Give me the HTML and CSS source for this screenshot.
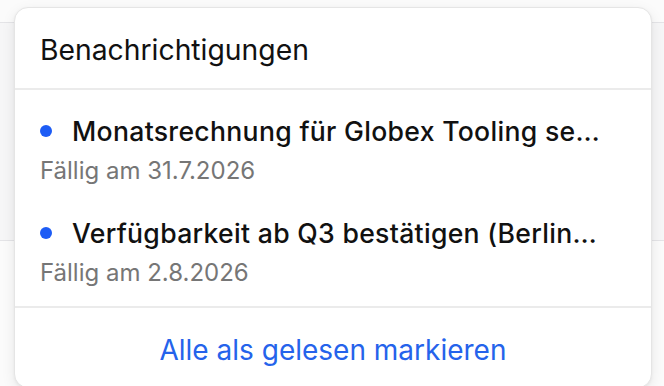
FILE: index.html
```html
<!DOCTYPE html>
<html lang="de">
<head>
<meta charset="utf-8">
<link rel="stylesheet" href="styles.css">
</head>
<body>
<div class="page">
  <div class="band"></div>
</div>
<div class="panel">
  <div class="panel-head">Benachrichtigungen</div>
  <ul class="list">
    <li class="item">
      <div class="item-title"><span class="dot"></span><span class="title-text">Monatsrechnung für Globex Tooling senden und prüfen</span></div>
      <div class="item-sub">Fällig am 31.7.2026</div>
    </li>
    <li class="item">
      <div class="item-title"><span class="dot"></span><span class="title-text">Verfügbarkeit ab Q3 bestätigen (Berlin-Nord)</span></div>
      <div class="item-sub">Fällig am 2.8.2026</div>
    </li>
  </ul>
  <div class="panel-foot"><a class="mark-all" href="#">Alle als gelesen markieren</a></div>
</div>
</body>
</html>
```
FILE: styles.css
```css
* { box-sizing: border-box; }
html, body { margin: 0; padding: 0; }
body {
  width: 664px;
  height: 386px;
  overflow: hidden;
  background: #fbfbfb;
  font-family: Inter, "Noto Sans", sans-serif;
  position: relative;
}
.page { padding-top: 22px; }
.band {
  height: 219px;
  background: #f6f6f7;
  border-top: 1px solid #e4e4e7;
  border-bottom: 1px solid #e4e4e7;
}
.panel {
  position: absolute;
  left: 14px;
  top: 7px;
  width: 638px;
  height: 381px;
  background: #fff;
  border: 1px solid #e5e5e5;
  border-radius: 14px;
  box-shadow: 0 4px 14px rgba(0,0,0,0.08), 0 1px 3px rgba(0,0,0,0.05);
  display: flex;
  flex-direction: column;
  overflow: hidden;
}
.panel-head {
  flex: none;
  height: 82px;
  padding: 3px 25px 0;
  display: flex;
  align-items: center;
  font-size: 28.3px;
  font-weight: 400;
  color: #111;
  border-bottom: 2px solid #ebebeb;
}
.list {
  flex: none;
  list-style: none;
  margin: 0;
  padding: 8px 0 4px;
  border-bottom: 2px solid #ebebeb;
}
.item {
  padding: 16px 44px 14px 25px;
  display: flex;
  flex-direction: column;
  gap: 8px;
}
.item-title {
  display: flex;
  align-items: center;
  gap: 20px;
  height: 34px;
  font-size: 26.6px;
  font-weight: 500;
  letter-spacing: 0.3px;
  color: #111;
}
.dot {
  flex: none;
  width: 12px;
  height: 12px;
  border-radius: 50%;
  background: #1d5cf5;
}
.title-text {
  white-space: nowrap;
  overflow: hidden;
  text-overflow: ellipsis;
  min-width: 0;
  line-height: 34px;
}
.item-sub {
  font-size: 24px;
  line-height: 30px;
  color: #767676;
}
.panel-foot {
  flex: 1;
  display: flex;
  justify-content: center;
  padding-top: 25px;
}
.mark-all {
  font-size: 28px;
  line-height: 34px;
  height: 34px;
  color: #2563eb;
  text-decoration: none;
}
```
